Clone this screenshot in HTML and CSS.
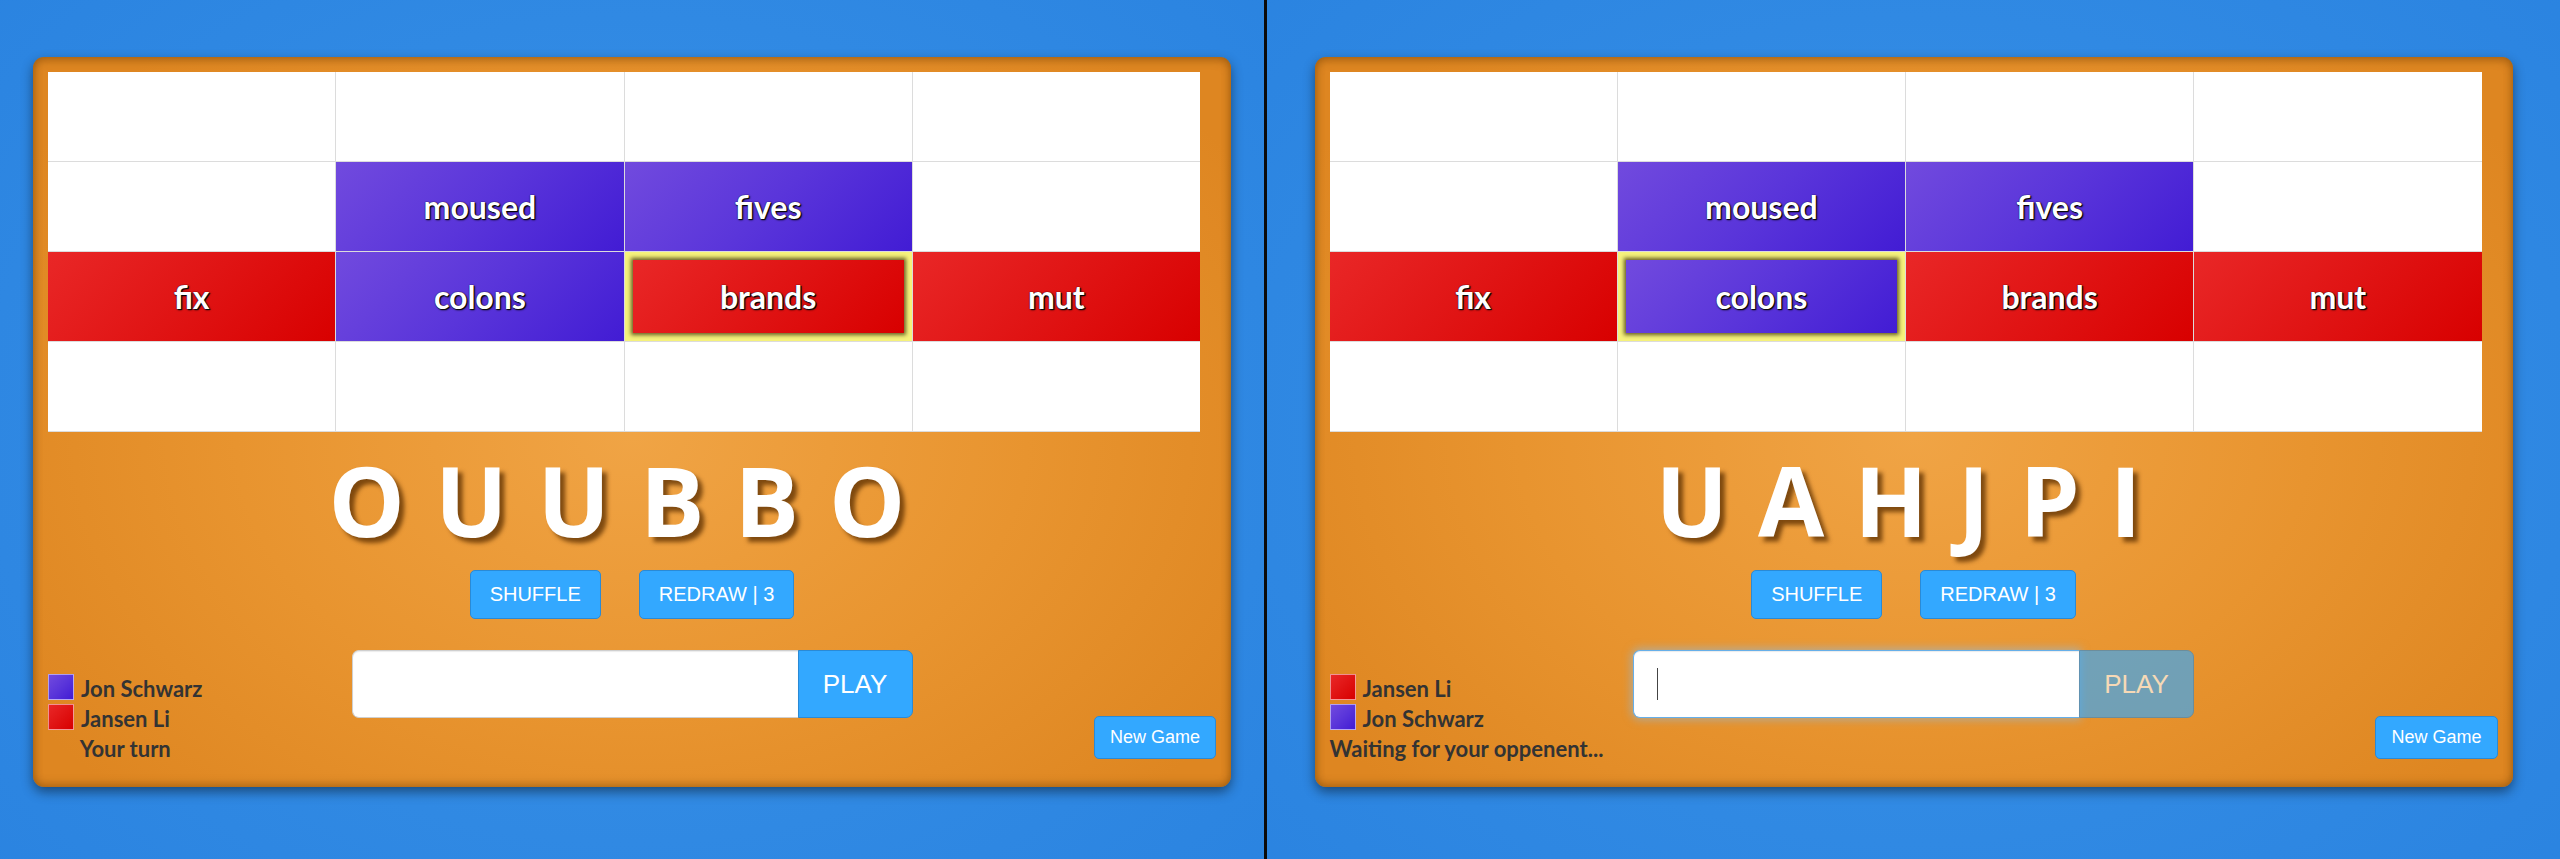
FILE: index.html
```html
<!DOCTYPE html>
<html>
<head>
<meta charset="utf-8">
<link rel="stylesheet" href="styles.css">
</head>
<body>
<div class="screens">
  <section class="half half-left">
    <div class="panel">
      <div class="board">
        <div class="cell"></div><div class="cell"></div><div class="cell"></div><div class="cell"></div>
        <div class="cell"></div>
        <div class="cell purple"><span>moused</span></div>
        <div class="cell purple"><span>fives</span></div>
        <div class="cell"></div>
        <div class="cell red"><span>fix</span></div>
        <div class="cell purple"><span>colons</span></div>
        <div class="cell selected"><div class="face red"><span>brands</span></div></div>
        <div class="cell red"><span>mut</span></div>
        <div class="cell"></div><div class="cell"></div><div class="cell"></div><div class="cell"></div>
      </div>
      <div class="rack">OUUBBO</div>
      <div class="actions">
        <button class="btn">SHUFFLE</button>
        <button class="btn">REDRAW | 3</button>
      </div>
      <div class="bottom">
        <div class="players">
          <div class="player"><span class="swatch purple"></span>Jon Schwarz</div>
          <div class="player"><span class="swatch red"></span>Jansen Li</div>
          <div class="status">Your turn</div>
        </div>
        <div class="entry">
          <div class="field"></div>
          <button class="btn play">PLAY</button>
        </div>
        <button class="btn new-game">New Game</button>
      </div>
    </div>
  </section>
  <div class="divider"></div>
  <section class="half half-right">
    <div class="panel">
      <div class="board">
        <div class="cell"></div><div class="cell"></div><div class="cell"></div><div class="cell"></div>
        <div class="cell"></div>
        <div class="cell purple"><span>moused</span></div>
        <div class="cell purple"><span>fives</span></div>
        <div class="cell"></div>
        <div class="cell red"><span>fix</span></div>
        <div class="cell selected"><div class="face purple"><span>colons</span></div></div>
        <div class="cell red"><span>brands</span></div>
        <div class="cell red"><span>mut</span></div>
        <div class="cell"></div><div class="cell"></div><div class="cell"></div><div class="cell"></div>
      </div>
      <div class="rack">UAHJPI</div>
      <div class="actions">
        <button class="btn">SHUFFLE</button>
        <button class="btn">REDRAW | 3</button>
      </div>
      <div class="bottom">
        <div class="players">
          <div class="player"><span class="swatch red"></span>Jansen Li</div>
          <div class="player"><span class="swatch purple"></span>Jon Schwarz</div>
          <div class="status">Waiting for your oppenent...</div>
        </div>
        <div class="entry">
          <div class="field focused"><span class="caret"></span></div>
          <button class="btn play disabled">PLAY</button>
        </div>
        <button class="btn new-game">New Game</button>
      </div>
    </div>
  </section>
</div>
</body>
</html>
```
FILE: styles.css
```css
* { box-sizing: border-box; }
html, body { margin: 0; padding: 0; }
body { width: 2560px; height: 859px; overflow: hidden; background: #000; }

.screens { display: flex; height: 859px; }
.half {
  height: 859px;
  padding-top: 57px;
  background: radial-gradient(ellipse 70% 80% at 50% 50%, #3b93e8 0%, #3089e3 60%, #2a83e0 100%);
}
.half-left { width: 1264px; }
.half-right { width: 1293px; }
.divider { width: 3px; background: #0b0b0b; }

.panel {
  width: 1198px;
  height: 730px;
  margin: 0 auto;
  padding: 15px;
  border-radius: 11px;
  background: radial-gradient(ellipse 60% 70% at 50% 52%, #f0a445 0%, #e8942f 55%, #de8621 100%);
  box-shadow: 0 5px 12px rgba(0, 0, 0, 0.45), inset 0 3px 10px rgba(110, 60, 0, 0.45), inset 0 -3px 8px rgba(110, 60, 0, 0.35);
  font-family: "Lato", "Open Sans", sans-serif;
}

.board {
  width: 1152px;
  display: grid;
  grid-template-columns: repeat(4, 1fr);
  grid-template-rows: repeat(4, 89px);
  gap: 1px;
  background: #dcdcdc;
  border-bottom: 1px solid #dcdcdc;
}
.cell {
  background: #fff;
  display: flex;
  align-items: center;
  justify-content: center;
  color: #fff;
  font-weight: 700;
  font-size: 32px;
  text-shadow: 1px 1px 2px #000, 0 0 1px #000, 1px 1px 0 #222;
}
.red { background: linear-gradient(135deg, #e92727 0%, #e01414 50%, #d80000 100%); }
.purple { background: linear-gradient(135deg, #714ade 0%, #5a35da 50%, #421cd4 100%); }
.cell.selected { background: #f6f27b; padding: 8px; }
.face {
  width: 100%;
  height: 100%;
  display: flex;
  align-items: center;
  justify-content: center;
  box-shadow: 0 0 4px 2px rgba(40, 30, 0, 0.7);
}

.rack {
  margin-top: 2px;
  height: 131px;
  line-height: 131px;
  text-align: center;
  font-family: "Open Sans", sans-serif;
  font-weight: 700;
  font-size: 96px;
  letter-spacing: 30px;
  color: #fff;
  text-shadow: 5px 5px 4px rgba(90, 45, 0, 0.75);
}

.actions {
  margin-top: 5px;
  display: flex;
  justify-content: center;
  gap: 38px;
}
.btn {
  font-family: "Liberation Sans", Arial, sans-serif;
  color: #fff;
  background: #33a8ff;
  border: 1px solid #2a8ad6;
  border-radius: 5px;
  cursor: pointer;
}
.actions .btn {
  height: 49px;
  font-size: 20px;
  padding: 0 19px;
}

.bottom {
  margin-top: 31px;
  display: grid;
  grid-template-columns: 1fr auto 1fr;
  align-items: start;
}
.players {
  width: fit-content;
  margin-top: 24px;
  color: #333;
  font-size: 22px;
  font-weight: 700;
}
.player {
  height: 30px;
  line-height: 30px;
  display: flex;
  align-items: flex-start;
  white-space: nowrap;
}
.swatch {
  width: 26px;
  height: 26px;
  margin-right: 7px;
  border: 1px solid rgba(255, 255, 255, 0.55);
}
.status {
  height: 30px;
  line-height: 30px;
  text-align: center;
  white-space: nowrap;
}

.entry {
  display: flex;
  width: 561px;
  height: 68px;
}
.field {
  flex: 1;
  background: #fff;
  border: 1px solid #cfcfcf;
  border-right: none;
  border-radius: 7px 0 0 7px;
  box-shadow: inset 0 1px 1px rgba(0, 0, 0, 0.08);
  display: flex;
  align-items: center;
  padding-left: 23px;
}
.field.focused {
  border-color: #66afe9;
  box-shadow: inset 0 1px 1px rgba(0, 0, 0, 0.08), 0 0 8px 2px rgba(140, 190, 230, 0.55);
}
.caret { width: 1px; height: 32px; background: #444; }
.btn.play {
  width: 115px;
  height: 68px;
  font-size: 26px;
  border-radius: 0 7px 7px 0;
}
.btn.play.disabled { opacity: 0.65; }

.btn.new-game {
  justify-self: end;
  margin-top: 66px;
  height: 43px;
  padding: 0 15px;
  font-size: 18px;
}
```
